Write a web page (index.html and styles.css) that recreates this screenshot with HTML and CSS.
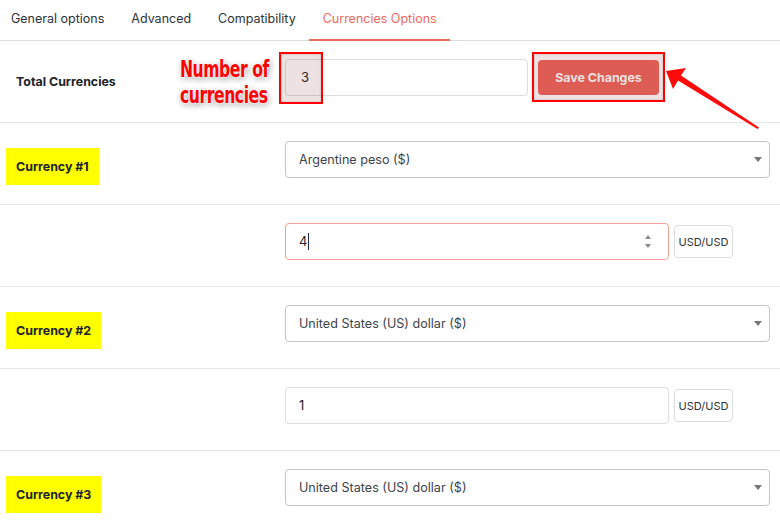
FILE: index.html
```html
<!DOCTYPE html>
<html lang="en">
<head>
<meta charset="utf-8">
<title>Currencies Options</title>
<link rel="stylesheet" href="styles.css">
</head>
<body>
<div class="page">
  <nav class="tabs">
    <a class="tab">General options</a>
    <a class="tab">Advanced</a>
    <a class="tab">Compatibility</a>
    <a class="tab active">Currencies Options</a>
  </nav>

  <div class="row">
    <div class="label">Total Currencies</div>
    <div class="field">
      <div class="input total">3</div>
      <button class="save">Save Changes</button>
    </div>
  </div>

  <div class="row">
    <div class="label hl">Currency #1</div>
    <div class="field">
      <div class="select"><span>Argentine peso ($)</span><span class="caret"></span></div>
    </div>
  </div>

  <div class="row">
    <div class="label"></div>
    <div class="field">
      <div class="input rate focus"><span class="val">4</span><span class="cursor"></span><span class="spin"><i class="up"></i><i class="down"></i></span></div>
      <div class="unit">USD/USD</div>
    </div>
  </div>

  <div class="row">
    <div class="label hl">Currency #2</div>
    <div class="field">
      <div class="select"><span>United States (US) dollar ($)</span><span class="caret"></span></div>
    </div>
  </div>

  <div class="row">
    <div class="label"></div>
    <div class="field">
      <div class="input rate"><span class="val">1</span></div>
      <div class="unit">USD/USD</div>
    </div>
  </div>

  <div class="row">
    <div class="label hl">Currency #3</div>
    <div class="field">
      <div class="select"><span>United States (US) dollar ($)</span><span class="caret"></span></div>
    </div>
  </div>

  <div class="note"><span>Number of</span><span>currencies</span></div>
  <div class="mark mark-num"></div>
  <div class="mark mark-save"></div>
  <svg class="arrow" width="110" height="80" viewBox="0 0 110 80">
    <polygon points="2,17 22,14 17,21.5 95,73.5 93.5,75 14,26.5 9,35" fill="#ff0a0a"/>
  </svg>
</div>
</body>
</html>
```

FILE: styles.css
```css
* { box-sizing: border-box; }
html, body { margin: 0; padding: 0; background: #fff; }
body {
  font-family: Inter, "Noto Sans", sans-serif;
  color: #1d2327;
  width: 780px;
  height: 525px;
  overflow: hidden;
}
.page { position: relative; width: 780px; }

.tabs {
  display: flex;
  height: 41px;
  border-bottom: 1px solid #dcdcde;
  margin-left: -2.5px;
}
.tab {
  display: block;
  padding: 10px 13.5px 0;
  height: 40px;
  line-height: 18px;
  font-size: 12.5px;
  color: #2c3338;
}
.tab.active {
  color: #ee6a5e;
  border-bottom: 2px solid #ee6a5e;
  height: 41px;
}

.row {
  display: grid;
  grid-template-columns: 279px 1fr;
  height: 82px;
  padding: 0 10px 0 6px;
  border-bottom: 1px solid #e6e6e6;
}
.label {
  align-self: center;
  padding: 0 10px;
  height: 37px;
  line-height: 37px;
  font-size: 12.4px;
  font-weight: 700;
  color: #1d2327;
  width: max-content;
}
.label.hl { background: #ffff00; margin-top: 5px; }
.field {
  align-self: start;
  margin-top: 18px;
  display: flex;
  align-items: center;
}

.input {
  height: 37px;
  border: 1px solid #dcdcde;
  border-radius: 4px;
  padding: 0 13px;
  line-height: 35px;
  font-size: 13px;
  color: #1d2327;
  display: flex;
  align-items: center;
}
.input.total { width: 243px; padding-left: 15px; }
.input.rate { width: 384px; }
.input.focus { border-color: #f29d95; }
.cursor {
  width: 1px;
  height: 17px;
  background: #1e2a55;
  margin-left: 1px;
}
.spin {
  margin-left: auto;
  margin-right: 4px;
  display: flex;
  flex-direction: column;
  gap: 5px;
}
.spin i {
  display: block;
  width: 0;
  height: 0;
  border-left: 3px solid transparent;
  border-right: 3px solid transparent;
}
.spin .up { border-bottom: 4px solid #8a8a8a; }
.spin .down { border-top: 4px solid #8a8a8a; }

.unit {
  margin-left: 5px;
  height: 33px;
  width: 59px;
  border: 1px solid #dcdcde;
  border-radius: 4px;
  font-size: 11px;
  color: #2c3338;
  display: flex;
  align-items: center;
  justify-content: center;
}

.save {
  margin-left: 10px;
  width: 121px;
  height: 35px;
  border: 0;
  border-radius: 4px;
  background: #eb6157;
  color: #fff;
  font-family: Inter, "Noto Sans", sans-serif;
  font-size: 12.4px;
  font-weight: 700;
  padding: 0;
}

.select {
  width: 485px;
  height: 37px;
  border: 1px solid #c3c4c7;
  border-radius: 4px;
  padding: 0 7px 0 13px;
  font-size: 12.6px;
  color: #3c434a;
  display: flex;
  align-items: center;
  justify-content: space-between;
}
.caret {
  width: 0;
  height: 0;
  border-left: 4px solid transparent;
  border-right: 4px solid transparent;
  border-top: 5px solid #777;
}

/* annotations over the screenshot */
.note {
  position: absolute;
  left: 180px;
  top: 56px;
  display: flex;
  flex-direction: column;
  font-family: "DejaVu Sans Condensed", "DejaVu Sans", sans-serif;
  font-weight: 700;
  font-size: 19.5px;
  line-height: 23px;
  letter-spacing: -0.5px;
  color: #ff0000;
  transform: scale(0.89, 1.15);
  transform-origin: left top;
  text-shadow: 0 0 2px #fff, 0 0 3px #fff, 1px 2px 6px rgba(0,0,0,0.45);
}
.mark {
  position: absolute;
  border: 2px solid #ff0000;
  background: rgba(150, 70, 70, 0.16);
  box-shadow: inset 0 0 2px rgba(0,0,0,0.25);
}
.mark-num { left: 279px; top: 52px; width: 44px; height: 52px; }
.mark-save { left: 532px; top: 52px; width: 133px; height: 50px; }
.arrow {
  position: absolute;
  left: 664px;
  top: 54px;
}
```
